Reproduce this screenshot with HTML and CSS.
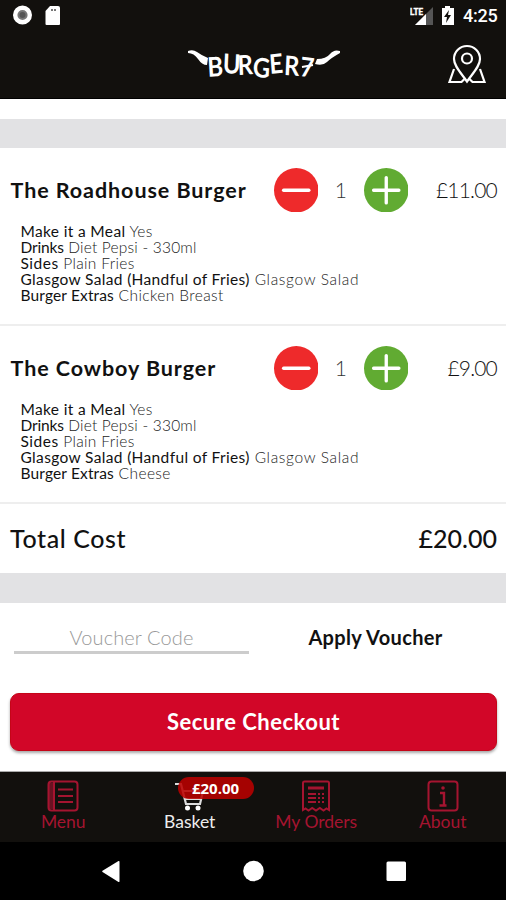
FILE: index.html
```html
<!DOCTYPE html>
<html lang="en">
<head>
<meta charset="utf-8">
<title>Burger7 Basket</title>
<link rel="stylesheet" href="styles.css">
</head>
<body>
<header class="top">
  <div class="status">
    <svg class="status-left" width="50" height="24" viewBox="0 0 50 24"><circle cx="10.500" cy="11" r="7.300" fill="#777" stroke="#fff" stroke-width="4.400"/><circle cx="10.500" cy="11" r="3" fill="#555"/><path d="M38 2h8q2 0 2 2v16q0 1-1 1H34.500q-1 0-1-1V7z" fill="#fff"/><path d="M39 5h2v2h-2zm3 0h2v2h-2z" fill="#777"/></svg>
    <div class="status-right">
      <svg width="50" height="24" viewBox="0 0 50 24"><text x="0" y="10.500" class="lte" textLength="13" lengthAdjust="spacingAndGlyphs">LTE</text><path d="M23 3v18H5z" fill="#555"/><path d="M16 10v11H5z" fill="#fff"/><path d="M35 2h5v2h4v17H32V4h3z" fill="#fff"/><path d="M39 6l-5 7h3l-1 6 5-8h-3z" fill="#12100d"/></svg>
      <span class="clock">4:25</span>
    </div>
  </div>
  <div class="brand">
    <svg class="logo" width="156" height="36" viewBox="0 0 156 36"><path d="M2 4q5-2 9 1t11 6l-1 7q-5 0-9-6T2 6zM154 4q-6-2-10 3t-13 5l-2 5q8 2 12-2t13-9z" fill="#fff"/><g transform="scale(.88 1)"><text x="25 41.500 59 75.500 95.500 111 129" y="30 26 28 30 27 28 29" rotate="-4 3 -3 3 -5 3 6" class="logo-text">BURGER7</text></g><path d="M116 20l11-2" stroke="#fff" stroke-width="1.800"/></svg>
    <svg class="pin" width="40" height="42" viewBox="0 0 40 42"><g fill="none" stroke="#fff" stroke-width="2.200"><path d="M20 38.500C14 30 7 23 7 16a13 13 0 0 1 26 0C33 23 26 30 20 38.500z"/><circle cx="20" cy="15.500" r="5"/><path d="M7 26L2.500 39H14.500l3-3M33 26l4.500 13H25.500l-3-3"/></g></svg>
  </div>
</header>
<main>
  <div class="band first"></div>
  <section class="item">
    <div class="row"><h2>The Roadhouse Burger</h2>
      <svg class="btn" viewBox="0 0 44 44"><circle cx="22" cy="22" r="22" fill="#ee2a2b"/><path d="M9.500 22h25" class="sign"/></svg>
      <span class="qty">1</span>
      <svg class="btn" viewBox="0 0 44 44"><circle cx="22" cy="22" r="22" fill="#61ab32"/><path d="M9.500 22h25M22 9.500v25" class="sign"/></svg>
      <span class="price">£11.00</span></div>
    <ul>
      <li class="l1"><b>Make it a Meal</b> Yes</li>
      <li class="l2"><b>Drinks</b> Diet Pepsi - 330ml</li>
      <li class="l3"><b>Sides</b> Plain Fries</li>
      <li class="l4"><b>Glasgow Salad (Handful of Fries)</b> Glasgow Salad</li>
      <li class="l5"><b>Burger Extras</b> Chicken Breast</li>
    </ul>
  </section>
  <section class="item">
    <div class="row"><h2>The Cowboy Burger</h2>
      <svg class="btn" viewBox="0 0 44 44"><circle cx="22" cy="22" r="22" fill="#ee2a2b"/><path d="M9.500 22h25" class="sign"/></svg>
      <span class="qty">1</span>
      <svg class="btn" viewBox="0 0 44 44"><circle cx="22" cy="22" r="22" fill="#61ab32"/><path d="M9.500 22h25M22 9.500v25" class="sign"/></svg>
      <span class="price">£9.00</span></div>
    <ul>
      <li class="l1"><b>Make it a Meal</b> Yes</li>
      <li class="l2"><b>Drinks</b> Diet Pepsi - 330ml</li>
      <li class="l3"><b>Sides</b> Plain Fries</li>
      <li class="l4"><b>Glasgow Salad (Handful of Fries)</b> Glasgow Salad</li>
      <li class="l5"><b>Burger Extras</b> Cheese</li>
    </ul>
  </section>
  <div class="total"><span class="label">Total Cost</span><span class="sum">£20.00</span></div>
  <div class="band"></div>
  <div class="voucher"><div class="field">Voucher Code</div><div class="apply">Apply Voucher</div></div>
  <div class="checkout">Secure Checkout</div>
</main>
<nav class="tabs">
  <div class="tab"><svg width="32" height="32" viewBox="0 0 32 32"><g fill="none" stroke="#a51430" stroke-width="2"><rect x="1.500" y="1.500" width="29" height="29" rx="3"/><path d="M7 2v28M11 9.500h15M11 16h15M11 22h15"/></g><path d="M2 3h4v26H2z" fill="#a51430" opacity=".6"/></svg><span>Menu</span></div>
  <div class="tab active"><svg width="32" height="32" viewBox="0 0 32 32"><g fill="none" stroke="#ddd" stroke-width="2.200"><path d="M1 4h6l5 20h14l3-13H9M11 19h17"/></g><circle cx="13.500" cy="28" r="2.500" fill="#fff"/><circle cx="24" cy="28" r="2.500" fill="#fff"/></svg><span>Basket</span><span class="badge">£20.00</span></div>
  <div class="tab"><svg width="32" height="32" viewBox="0 0 32 32"><g fill="none" stroke="#a51430" stroke-width="2"><path d="M3 30V3q0-1.500 1.500-1.500h23Q29 1.500 29 3v27l-2.500-1.500-3 2-3.700-2.500-3.800 2.500-3.800-2.500-3.700 2.500-3-2z"/><path d="M8 8h16" stroke-width="3"/><path d="M8 14h8m2 0h2m2 0h2M8 18h8m2 0h2m2 0h2M8 22h8m2 0h2m2 0h2"/></g></svg><span>My Orders</span></div>
  <div class="tab"><svg width="32" height="32" viewBox="0 0 32 32"><g fill="none" stroke="#a51430" stroke-width="2"><rect x="1.500" y="1.500" width="29" height="29" rx="3"/><path d="M13 13h4v12M12.500 25.500h7" stroke-width="2.400"/></g><circle cx="16" cy="8" r="1.800" fill="#a51430"/></svg><span>About</span></div>
</nav>
<footer class="sys">
  <svg width="506" height="58" viewBox="0 0 506 58"><path d="M119.500 20v19.500a1 1 0 0 1-1 .5L102.500 30q-.8-.700 0-1.300L118.500 19q1-.500 1 1z" fill="#fff"/><circle cx="253.500" cy="29" r="10.300" fill="#fff"/><rect x="386.500" y="19.500" width="19.500" height="19.500" rx="1.500" fill="#fff"/></svg>
</footer>
</body>
</html>
```
FILE: styles.css
```css
* { box-sizing: border-box; margin: 0; padding: 0; }
body { width: 506px; height: 900px; overflow: hidden; display: flex; flex-direction: column; background: #fff; color: #111; font-family: Lato, "Liberation Sans", sans-serif; white-space: nowrap; }
svg { display: block; flex: none; }
.top { height: 99px; background: #12100d; border-bottom: 1px solid #000; flex: none; }
.status { height: 32px; padding: 4px 9px 0 12px; display: flex; justify-content: space-between; }
.status-right { display: flex; gap: 3px; }
.clock { font: 500 18px/24px Roboto, sans-serif; color: #fff; width: 34px; letter-spacing: -.2px; }
.lte { font: 700 9px Roboto, sans-serif; fill: #fff; stroke: #fff; stroke-width: .4; }
.brand { display: flex; justify-content: space-between; padding: 15px 19px 0 186px; }
.pin { margin-top: -4px; }
.logo-text { font: 700 27px Lato, sans-serif; fill: #fff; }
main { height: 673px; flex: none; border-bottom: 1px solid #aaa; }
.band { height: 30px; background: #e2e2e4; }
.band.first { margin-top: 20px; height: 29px; }
.item { height: 178px; border-bottom: 2px solid #eee; }
.row { display: flex; align-items: center; height: 84px; padding: 0 9px 0 10.5px; }
h2 { font-size: 21.5px; font-weight: 700; line-height: 28px; width: 263px; letter-spacing: .93px; }
.btn { width: 44.5px; height: 44.5px; }
.sign { stroke: #fff; stroke-width: 3.300; stroke-linecap: round; fill: none; }
.qty { width: 45.5px; text-align: center; font-size: 21px; font-weight: 300; color: #333; position: relative; top: -1px; }
.price { margin-left: auto; font-size: 21px; font-weight: 300; letter-spacing: -.8px; position: relative; top: -1px; }
ul { list-style: none; padding-left: 20.5px; margin-top: -9px; }
li { font-size: 15.5px; line-height: 16px; font-weight: 300; height: 16px; color: #222; letter-spacing: .3px; }
li b { font-weight: 400; color: #111; letter-spacing: .35px; }
.l2 { letter-spacing: .2px; }
.l2 b { letter-spacing: -.15px; }
.l3 { letter-spacing: .35px; }
.l3 b { letter-spacing: .5px; }
.l4 { letter-spacing: .65px; }
.l5 { letter-spacing: .4px; }
.l5 b { letter-spacing: .15px; }
.total { height: 69px; display: flex; justify-content: space-between; align-items: center; padding: 0 9px 2px 10px; font-size: 25px; font-weight: 500; }
.label { letter-spacing: .6px; }
.voucher { height: 90px; display: flex; padding-left: 14px; }
.field { width: 235px; height: 51px; padding-top: 20px; line-height: 28px; border-bottom: 3px solid #ccc; text-align: center; color: #999; font-size: 20px; font-weight: 300; letter-spacing: .1px; }
.apply { flex: 1; padding: 20px 4px 0 0; line-height: 28px; text-align: center; font-size: 20px; font-weight: 700; letter-spacing: .33px; }
.checkout { margin: 0 9px 0 10px; height: 58px; line-height: 55px; border-radius: 9px; border: 1px solid #c50518; background: #d20628; color: #fff; text-align: center; font-size: 22px; font-weight: 700; letter-spacing: .5px; box-shadow: 0 2px 3px rgba(0,0,0,.35); }
.tabs { height: 70px; flex: none; display: grid; grid-template-columns: repeat(4, 1fr); background: #12100d; }
.tab { position: relative; display: flex; flex-direction: column; align-items: center; padding-top: 8px; color: #a51430; font-size: 17.5px; line-height: 20px; }
.active { color: #eee; }
.badge { position: absolute; left: 51px; top: 5px; width: 76px; height: 22px; border-radius: 11px; background: rgba(186,0,0,.88); color: #fff; font: 700 15px/22px "Open Sans", sans-serif; text-align: center; }
.sys { height: 58px; flex: none; background: #000; }
```
